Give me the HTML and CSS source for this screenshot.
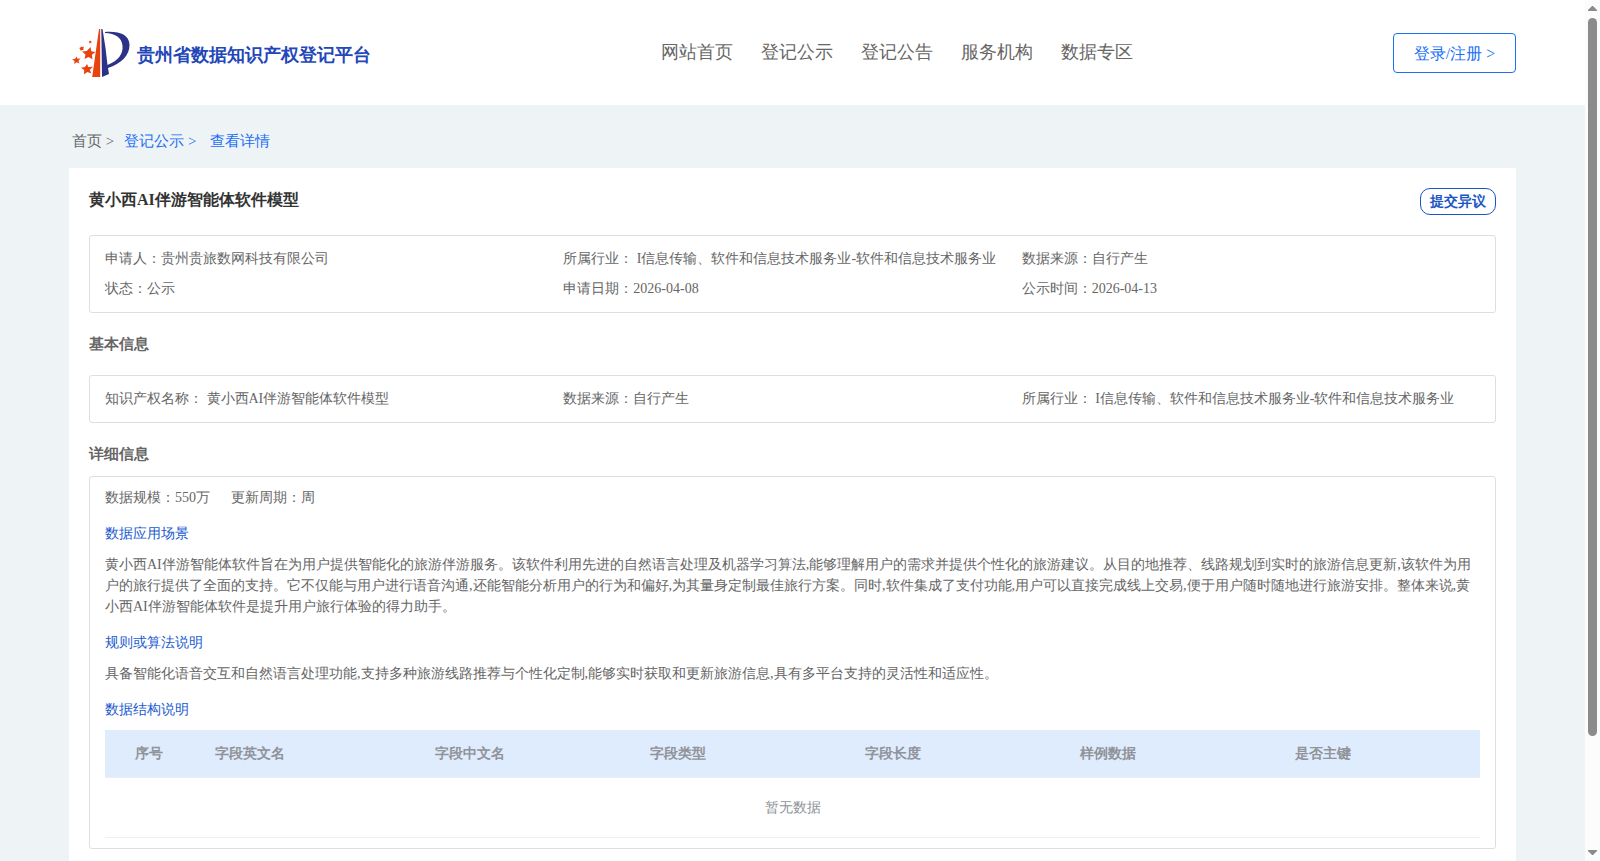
FILE: index.html
```html
<!DOCTYPE html>
<html lang="en">
<head>
<meta charset="utf-8">
<title>贵州省数据知识产权登记平台</title>
<link rel="stylesheet" href="styles.css">
</head>
<body>
<div class="viewport">
  <div class="page">
    <header class="header">
      <a class="brand" href="#">
        <svg class="brand-mark" viewBox="0 0 58 50" aria-hidden="true">
          <path fill="#e8430f" d="M27 1h1.200v48h-8z"/>
          <path fill="#2b3288" d="M29.300 1h1.200l3 19 2 17C46 33 51.500 26 50.500 17.500 49.500 9 43 5.500 33 5v-1C48 3 57 7 57.500 16.500 58 27 49 36 36 40l1 6-7 3z"/>
          <g fill="#e8430f">
            <path d="M18.500 19l.8 4.200 4.200.8-3.600 2.800.6 4.400-4-2.200-4 2 1-4.400-3.500-3.100 4.800-.5z"/>
            <path d="M4.500 28.500l1 2.200 3-.2-2 2.200 1 2.900-2.800-1.400-2.400 1.700.2-3L.2 31.200l3-.5z"/>
            <path d="M15 36l1.300 3 4.700-.3-3.200 3 1.500 3.800-3.800-1.600-3.500 2.400.2-4.200-3.200-2.400 4-.6z"/>
            <path d="M9 18.500l1.300.6 1.600-.5-.5 1.600.3 1.600-1.500.1-1.600.8-.5-1.600-1-1.200 1.500-.3z"/>
            <path d="M17.500 12.500l1 .5 1-.2-.3 1 .3 1-1 .1-1 .5-.2-1-.7-.9 1-.1z"/>
          </g>
        </svg>
        <span class="brand-name">贵州省数据知识产权登记平台</span>
      </a>
      <nav class="nav">
        <a href="#">网站首页</a>
        <a href="#">登记公示</a>
        <a href="#">登记公告</a>
        <a href="#">服务机构</a>
        <a href="#">数据专区</a>
      </nav>
      <button class="login" type="button">登录/注册 &gt;</button>
    </header>
    <main class="main">
      <nav class="crumbs" aria-label="面包屑">
        <a class="crumb-home" href="#">首页 &gt;</a>
        <a href="#">登记公示 &gt;</a>
        <a class="crumb-current" href="#">查看详情</a>
      </nav>
      <article class="card">
        <div class="card-head">
          <h1 class="title">黄小西AI伴游智能体软件模型</h1>
          <button class="objection" type="button">提交异议</button>
        </div>
        <div class="box info">
          <p>申请人：贵州贵旅数网科技有限公司</p>
          <p>所属行业： I信息传输、软件和信息技术服务业-软件和信息技术服务业</p>
          <p>数据来源：自行产生</p>
          <p>状态：公示</p>
          <p>申请日期：2026-04-08</p>
          <p>公示时间：2026-04-13</p>
        </div>
        <h2 class="section-title">基本信息</h2>
        <div class="box info">
          <p>知识产权名称： 黄小西AI伴游智能体软件模型</p>
          <p>数据来源：自行产生</p>
          <p>所属行业： I信息传输、软件和信息技术服务业-软件和信息技术服务业</p>
        </div>
        <h2 class="section-title section-title-tight">详细信息</h2>
        <div class="box detail">
          <div class="meta"><span>数据规模：550万</span><span>更新周期：周</span></div>
          <h3>数据应用场景</h3>
          <p>黄小西AI伴游智能体软件旨在为用户提供智能化的旅游伴游服务。该软件利用先进的自然语言处理及机器学习算法,能够理解用户的需求并提供个性化的旅游建议。从目的地推荐、线路规划到实时的旅游信息更新,该软件为用户的旅行提供了全面的支持。它不仅能与用户进行语音沟通,还能智能分析用户的行为和偏好,为其量身定制最佳旅行方案。同时,软件集成了支付功能,用户可以直接完成线上交易,便于用户随时随地进行旅游安排。整体来说,黄小西AI伴游智能体软件是提升用户旅行体验的得力助手。</p>
          <h3>规则或算法说明</h3>
          <p>具备智能化语音交互和自然语言处理功能,支持多种旅游线路推荐与个性化定制,能够实时获取和更新旅游信息,具有多平台支持的灵活性和适应性。</p>
          <h3>数据结构说明</h3>
          <table class="fields">
            <colgroup><col class="col-index"><col class="col-name"><col class="col"><col class="col"><col class="col"><col class="col"><col></colgroup>
            <thead>
              <tr><th class="index">序号</th><th>字段英文名</th><th>字段中文名</th><th>字段类型</th><th>字段长度</th><th>样例数据</th><th>是否主键</th></tr>
            </thead>
            <tbody>
              <tr><td class="empty" colspan="7">暂无数据</td></tr>
            </tbody>
          </table>
        </div>
      </article>
    </main>
  </div>
  <div class="scrollbar" aria-hidden="true">
    <svg class="arrow" viewBox="0 0 9 5"><path d="M4 0h1l4 4v1H0V4z"/></svg>
    <div class="track"><div class="thumb"></div></div>
    <svg class="arrow" viewBox="0 0 9 5"><path d="M0 0h9v1L5 5H4L0 1z"/></svg>
  </div>
</div>
</body>
</html>
```
FILE: styles.css
```css
* { box-sizing: border-box; }

body {
  margin: 0;
  font-family: "Liberation Serif", serif;
  font-size: 14px;
  line-height: 21px;
  color: #666;
}

h1, h2, h3, p { margin: 0; }
a { color: inherit; text-decoration: none; }
button { font-family: inherit; background: #fff; cursor: pointer; padding: 0; }

.viewport { display: flex; height: 100vh; background: #eef3f6; }
.page { flex: 1; min-width: 0; overflow-y: auto; scrollbar-width: none; }

.header {
  display: flex;
  align-items: center;
  justify-content: space-between;
  height: 105px;
  padding: 0 69px;
  background: #fff;
}
.brand { display: flex; align-items: center; gap: 7px; padding-left: 3px; }
.brand-mark { width: 58px; height: 50px; }
.brand-name { font-size: 18px; font-weight: bold; color: #2347b8; padding-top: 6px; }
.nav { display: flex; gap: 28px; font-size: 18px; padding-left: 30px; }
.login {
  width: 123px;
  height: 40px;
  padding-top: 3px;
  border: 1px solid #1a6ff5;
  border-radius: 4px;
  font-size: 16px;
  color: #1a6ff5;
}

.main { padding: 0 69px 40px; }
.crumbs { display: flex; gap: 10px; padding: 26px 3px 16px; font-size: 15px; color: #1a6ff5; }
.crumb-home { color: #666; }
.crumb-current { padding-left: 4px; }

.card { background: #fff; padding: 20px; }
.card-head { display: flex; justify-content: space-between; height: 47px; align-items: flex-start; }
.title { font-size: 16px; line-height: 24px; color: #333; }
.objection {
  width: 76px;
  height: 27px;
  border: 1px solid #1a56c4;
  border-radius: 10px;
  font-size: 14px;
  font-weight: bold;
  color: #1a56c4;
}

.box { border: 1px solid #dcdee0; border-radius: 3px; padding: 0 15px; }
.info {
  display: grid;
  grid-template-columns: repeat(3, 1fr);
  row-gap: 9px;
  padding-top: 12px;
  padding-bottom: 13px;
}
.section-title { font-size: 15px; line-height: 22px; padding: 20px 0; }
.section-title-tight { padding-bottom: 11px; }

.detail { padding-top: 10px; padding-bottom: 10px; }
.meta { display: flex; gap: 21px; }
.detail h3 { font-size: 14px; font-weight: normal; color: #1a5ad0; padding: 15px 0 10px; }

.fields { width: 100%; table-layout: fixed; border-collapse: separate; border-spacing: 0; }
.col-index { width: 7.27%; }
.col-name { width: 16%; }
.col { width: 15.64%; }
.fields th {
  height: 48px;
  padding: 0 10px;
  text-align: left;
  color: #909399;
  background: #dfecfe;
  border-bottom: 1px solid #ebeef5;
}
.fields .index { padding-left: 30px; }
.fields .empty {
  height: 60px;
  padding: 0;
  text-align: center;
  color: #909399;
  border-bottom: 1px solid #ebeef5;
}

.scrollbar {
  display: flex;
  flex-direction: column;
  align-items: center;
  gap: 7px;
  width: 15px;
  padding: 6px 0;
  background: #fcfcfc;
}
.arrow { width: 9px; height: 5px; fill: #8b8b8b; }
.track { flex: 1; width: 9px; }
.thumb { height: 87%; border-radius: 5px; background: #8b8b8b; }
```
